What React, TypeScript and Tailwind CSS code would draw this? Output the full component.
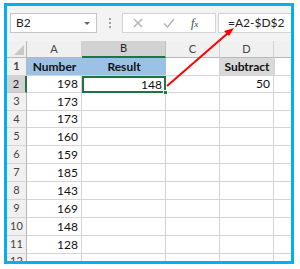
import React from "react";

const rows: { a: string; b?: string; d?: string }[] = [
  { a: "198", b: "148", d: "50" },
  { a: "173" },
  { a: "173" },
  { a: "160" },
  { a: "159" },
  { a: "185" },
  { a: "143" },
  { a: "169" },
  { a: "148" },
  { a: "128" },
];

const heights = ["h-[17px]", "h-[18px]", "h-[17px]", "h-[18px]", "h-[18px]", "h-[18px]", "h-[18px]", "h-[18px]", "h-[18px]", "h-[18px]"];

function RowHead({ n, sel }: { n: number | string; sel?: boolean }) {
  return (
    <div
      className={
        sel
          ? "w-[20px] shrink-0 bg-[#d2d2d2] border-r-2 border-r-[#217346] border-b border-b-[#c6c6c6] flex items-center justify-center text-[11px] text-[#222]"
          : "w-[20px] shrink-0 bg-[#f0f0f0] border-r border-r-[#b8b8b8] border-b border-b-[#d4d4d4] flex items-center justify-center text-[11px] text-[#444]"
      }
    >
      {n}
    </div>
  );
}

export default function App() {
  return (
    <div className="w-[300px] h-[269px] bg-white relative" style={{ fontFamily: "Lato, 'Open Sans', sans-serif" }}>
      <div className="ml-[4px] pt-[3px]">
        <div className="w-[290px] h-[261px] border-[3px] border-[#00b0f0] bg-white flex flex-col overflow-hidden">
          {/* toolbar */}
          <div className="h-[35px] shrink-0 bg-[#f3f3f3] flex items-start pt-[7px] pl-[3px]">
            <div className="w-[87px] h-[20px] bg-white border border-[#c6c6c6] flex items-center justify-between pl-[5px] pr-[6px]">
              <span className="text-[12px] text-[#222]">B2</span>
              <div className="w-0 h-0 border-l-[3px] border-r-[3px] border-t-[3px] border-l-transparent border-r-transparent border-t-[#666]" />
            </div>
            <div className="w-[25px] h-[20px] flex flex-col items-center justify-center gap-[2px]">
              <div className="w-[2px] h-[2px] bg-[#a0a0a0]" />
              <div className="w-[2px] h-[2px] bg-[#a0a0a0]" />
              <div className="w-[2px] h-[2px] bg-[#a0a0a0]" />
            </div>
            <div className="w-[94px] h-[20px] bg-white border border-[#d4d4d4] flex items-center">
              <svg width="20" height="20" viewBox="0 0 20 20" className="ml-[5px] shrink-0">
                <path d="M6 6 L14 14 M14 6 L6 14" stroke="#b4b4b4" strokeWidth="1.5" fill="none" />
              </svg>
              <svg width="20" height="20" viewBox="0 0 20 20" className="ml-[11px] shrink-0">
                <path d="M5 10.5 L8.5 14 L15 6" stroke="#b4b4b4" strokeWidth="1.5" fill="none" />
              </svg>
              <span className="ml-[12px] text-[12px] italic text-[#444]" style={{ fontFamily: "'Liberation Serif', serif" }}>
                f<span className="text-[9px]">x</span>
              </span>
            </div>
            <div className="ml-[2px] flex-1 h-[20px] bg-white border border-[#d4d4d4] border-r-0 flex items-center pl-[9px]">
              <span className="text-[12px] text-[#222]">=A2-$D$2</span>
            </div>
          </div>
          {/* column headers */}
          <div className="h-[17px] shrink-0 flex bg-[#f0f0f0] text-[11px] text-[#444]">
            <div className="w-[20px] shrink-0 border-r border-b border-[#b8b8b8] relative">
              <div className="absolute right-[2px] bottom-[2px] w-0 h-0" style={{ borderBottom: "10px solid #c8c8c8", borderLeft: "10px solid transparent", borderTop: "0", borderRight: "0" }} />
            </div>
            <div className="w-[55px] shrink-0 border-r border-r-[#d0d0d0] border-b border-b-[#b8b8b8] flex items-center justify-center">A</div>
            <div className="w-[84px] shrink-0 border-r border-r-[#c0c0c0] border-b-2 border-b-[#217346] bg-[#d2d2d2] flex items-center justify-center text-[#222]">B</div>
            <div className="w-[54px] shrink-0 border-r border-r-[#d0d0d0] border-b border-b-[#b8b8b8] flex items-center justify-center">C</div>
            <div className="w-[54px] shrink-0 border-r border-r-[#d0d0d0] border-b border-b-[#b8b8b8] flex items-center justify-center">D</div>
            <div className="flex-1 border-b border-b-[#b8b8b8]" />
          </div>
          {/* row 1 */}
          <div className="h-[18px] shrink-0 flex text-[12px] font-bold text-[#111]">
            <RowHead n={1} />
            <div className="w-[55px] shrink-0 bg-[#9bc2e6] border-b border-b-[#d4d4d4] flex items-center justify-center">Number</div>
            <div className="w-[84px] shrink-0 bg-[#9bc2e6] border-b border-b-[#d4d4d4] flex items-center justify-center">Result</div>
            <div className="w-[54px] shrink-0 border-r border-b border-[#d4d4d4]" />
            <div className="w-[54px] shrink-0 bg-[#d9d9d9] border-b border-b-[#d4d4d4] flex items-center justify-center">Subtract</div>
            <div className="flex-1 border-l border-b border-[#d4d4d4]" />
          </div>
          {rows.map((r, i) => (
            <div key={i} className={`${heights[i]} shrink-0 flex text-[12px] text-[#111]`}>
              <RowHead n={i + 2} sel={i === 0} />
              <div className="w-[55px] shrink-0 border-r border-b border-[#d4d4d4] flex items-center justify-end pr-[3px]">{r.a}</div>
              <div
                className={
                  i === 0
                    ? "w-[84px] shrink-0 border-2 border-[#217346] flex items-center justify-end pr-[2px] relative"
                    : "w-[84px] shrink-0 border-r border-b border-[#d4d4d4]"
                }
              >
                {r.b}
                {i === 0 && <div className="absolute right-[-4px] bottom-[-4px] w-[5px] h-[5px] bg-[#217346] border border-white" />}
              </div>
              <div className="w-[54px] shrink-0 border-r border-b border-[#d4d4d4]" />
              <div className="w-[54px] shrink-0 border-r border-b border-[#d4d4d4] flex items-center justify-end pr-[3px]">{r.d}</div>
              <div className="flex-1 border-b border-[#d4d4d4]" />
            </div>
          ))}
          <div className="h-[8px] shrink-0 flex text-[11px] text-[#444] overflow-hidden">
            <div className="w-[20px] shrink-0 bg-[#f0f0f0] border-r border-r-[#b8b8b8] flex justify-center leading-[14px]">12</div>
            <div className="w-[55px] shrink-0 border-r border-[#d4d4d4]" />
            <div className="w-[84px] shrink-0 border-r border-[#d4d4d4]" />
            <div className="w-[54px] shrink-0 border-r border-[#d4d4d4]" />
            <div className="w-[54px] shrink-0 border-r border-[#d4d4d4]" />
          </div>
        </div>
      </div>
      <svg className="absolute left-0 top-0 pointer-events-none" width="300" height="269" viewBox="0 0 300 269">
        <line x1="167" y1="86" x2="228" y2="33" stroke="#ff0000" strokeWidth="2" />
        <polygon points="234,28 224,31 229,36" fill="#ff0000" />
      </svg>
    </div>
  );
}
